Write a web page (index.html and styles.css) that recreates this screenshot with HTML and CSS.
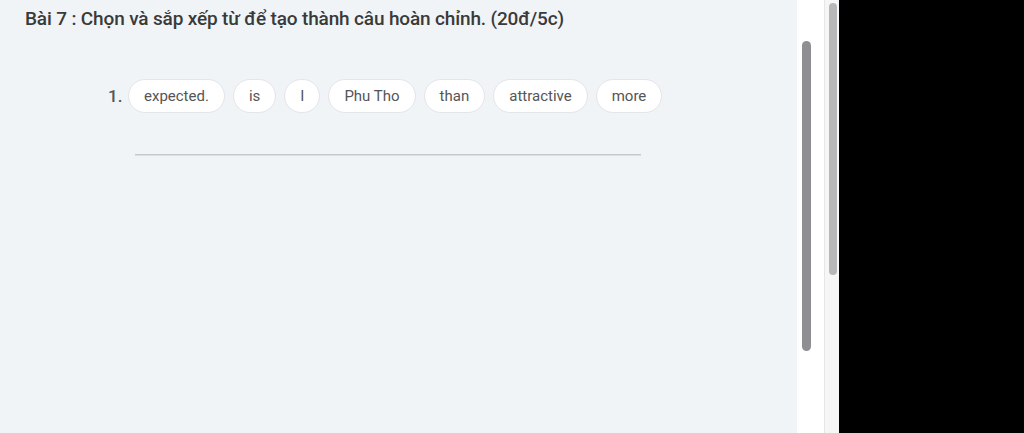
FILE: index.html
```html
<!DOCTYPE html>
<html lang="vi">
<head>
<meta charset="utf-8">
<link rel="stylesheet" href="styles.css">
</head>
<body>
<div class="screen">
  <main class="main">
    <h1 class="title">Bài 7 : Chọn và sắp xếp từ để tạo thành câu hoàn chỉnh. (20đ/5c)</h1>
    <div class="question">
      <span class="num">1.</span>
      <div class="chips">
        <span class="chip">expected.</span>
        <span class="chip">is</span>
        <span class="chip">I</span>
        <span class="chip">Phu Tho</span>
        <span class="chip">than</span>
        <span class="chip">attractive</span>
        <span class="chip">more</span>
      </div>
    </div>
    <div class="answer-line"></div>
  </main>
  <div class="track track-inner"><div class="thumb thumb-inner"></div></div>
  <div class="track track-outer"><div class="thumb thumb-outer"></div></div>
  <div class="black"></div>
</div>
</body>
</html>
```

FILE: styles.css
```css
html, body {
  margin: 0;
  padding: 0;
  height: 100%;
}
body {
  font-family: Roboto, "Noto Sans", sans-serif;
  overflow: hidden;
}
.screen {
  display: flex;
  height: 433px;
  width: 1024px;
}
.main {
  width: 797px;
  flex: none;
  background: #f0f4f7;
  padding: 7px 0 0 25px;
  box-sizing: border-box;
}
.title {
  margin: 0;
  font-size: 19px;
  font-weight: 500;
  line-height: 24px;
  color: #3a3a3a;
  letter-spacing: -0.15px;
}
.question {
  display: flex;
  align-items: center;
  margin: 48px 0 0 83px;
}
.num {
  font-size: 17px;
  font-weight: 500;
  color: #555;
  width: 20px;
}
.chips {
  display: flex;
  gap: 8px;
}
.chip {
  height: 34px;
  box-sizing: border-box;
  padding: 0 15px;
  border: 1px solid #e3e5e8;
  border-radius: 17px;
  background: #fff;
  display: flex;
  align-items: center;
  font-size: 15px;
  color: #555;
}
.answer-line {
  margin: 41px 0 0 110px;
  width: 506px;
  height: 1px;
  background: #c5c8cb;
  box-shadow: 0 1px 0 #dde0e3;
}
.track {
  flex: none;
  height: 100%;
  box-sizing: border-box;
  position: relative;
}
.track-inner {
  width: 27px;
  background: #fff;
}
.track-outer {
  width: 15px;
  background: #f6f6f6;
  border-left: 1px solid #e6e6e6;
}
.thumb {
  position: absolute;
  border-radius: 5px;
}
.thumb-inner {
  left: 5px;
  width: 9px;
  top: 41px;
  height: 310px;
  background: #8f8f93;
}
.thumb-outer {
  left: 4px;
  width: 8px;
  top: 3px;
  height: 272px;
  background: #b7b7b9;
}
.black {
  flex: 1;
  background: #000;
}
```
